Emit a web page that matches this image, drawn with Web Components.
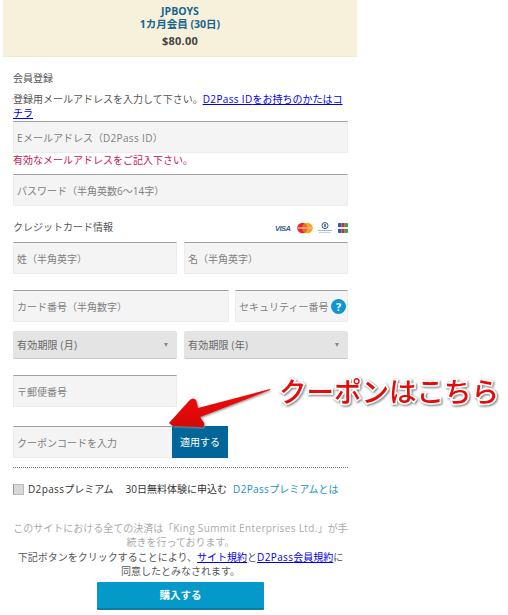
<!DOCTYPE html>
<html lang="ja">
<head>
<meta charset="utf-8">
<title>JPBOYS</title>
<style>
  html, body { margin: 0; padding: 0; background: #fff; overflow: hidden; }
  body { font: 10px/14px "Open Sans", "Noto Sans CJK JP", sans-serif; color: #555; }
</style>
</head>
<body>
<join-page></join-page>
<script>
class PlanBanner extends HTMLElement {
  constructor() {
    super()
    this.attachShadow({ mode: "open" })
    this.shadowRoot.innerHTML = `
      <style>
        :host {
          display: block;
          box-sizing: border-box;
          width: 354px;
          height: 57px;
          margin-left: 3px;
          padding-top: 5px;
          background: #f7f1db;
          border-bottom: 1px solid #eee8d2;
          text-align: center;
          font-weight: 700;
          font-size: 10.5px;
          line-height: 13px;
          color: #16658f;
        }
        .price { margin-top: 3px; color: #444; font-size: 11px; letter-spacing: .2px; }
      </style>
      <div>JPBOYS</div>
      <div>1カ月会員 (30日)</div>
      <div class="price">$80.00</div>
    `
  }
}
customElements.define("plan-banner", PlanBanner)

class TextField extends HTMLElement {
  constructor() {
    super()
    this.attachShadow({ mode: "open" })
    this.shadowRoot.innerHTML = `
      <style>
        :host {
          display: flex;
          align-items: center;
          box-sizing: border-box;
          height: 32px;
          padding: 1px 1px 0 3px;
          background: #f4f4f4;
          border-top: 1px solid #a0a0a0;
          border-left: 1px solid #ececec;
          border-right: 1px solid #ececec;
          border-bottom: 1px solid #ececec;
          color: #808080;
          font-size: 10px;
          white-space: nowrap;
        }
        .text { flex: 1; }
      </style>
      <span class="text"><slot></slot></span>
      <slot name="after"></slot>
    `
  }
}
customElements.define("text-field", TextField)

class SelectField extends HTMLElement {
  constructor() {
    super()
    this.attachShadow({ mode: "open" })
    this.shadowRoot.innerHTML = `
      <style>
        :host {
          display: flex;
          align-items: center;
          justify-content: space-between;
          box-sizing: border-box;
          height: 28px;
          padding: 0 4px;
          background: #e4e4e4;
          border-bottom: 1px solid #c8c8c8;
          border-radius: 2px;
          color: #666;
          font-size: 10px;
          letter-spacing: .2px;
        }
        i {
          width: 0;
          height: 0;
          margin-right: 5px;
          border-left: 2.5px solid transparent;
          border-right: 2.5px solid transparent;
          border-top: 4px solid #888;
        }
      </style>
      <span><slot></slot></span>
      <i></i>
    `
  }
}
customElements.define("select-field", SelectField)

class CardLogos extends HTMLElement {
  constructor() {
    super()
    this.attachShadow({ mode: "open" })
    this.shadowRoot.innerHTML = `
      <style>
        :host { display: block; line-height: 0; }
      </style>
      <svg width="74" height="12" viewBox="0 0 74 12">
        <text x="1" y="9" font-family="Liberation Sans" font-size="7.5" font-weight="700" font-style="italic" fill="#3b5a94" textLength="16">VISA</text>
        <circle cx="28.5" cy="6" r="5.3" fill="#e8262c"/>
        <circle cx="33.5" cy="6" r="5.3" fill="#f6a623"/>
        <path d="M31 1.4a5.3 5.3 0 0 1 0 9.2a5.3 5.3 0 0 1 0-9.2z" fill="#ee6a26"/>
        <rect x="24" y="5" width="15" height="2" fill="#f3b7a0" opacity=".7"/>
        <circle cx="51" cy="3.6" r="3" fill="none" stroke="#27518e" stroke-width="1"/>
        <rect x="50.3" y="2" width="1.4" height="3.2" fill="#27518e"/>
        <rect x="44" y="8" width="14" height="1" fill="#9db4d0"/>
        <rect x="45" y="10" width="12" height="1" fill="#c5d3e3"/>
        <rect x="64" y="1" width="3.4" height="10" rx="1" fill="#2a5ea8"/>
        <rect x="67.4" y="1" width="3.3" height="10" fill="#d8283b"/>
        <rect x="70.7" y="1" width="3.3" height="10" rx="1" fill="#3aa64a"/>
        <rect x="64" y="5" width="10" height="2" fill="#e7eef2"/>
      </svg>
    `
  }
}
customElements.define("card-logos", CardLogos)

class CouponCallout extends HTMLElement {
  constructor() {
    super()
    this.attachShadow({ mode: "open" })
    this.shadowRoot.innerHTML = `
      <style>
        :host {
          position: absolute;
          left: 160px;
          top: 370px;
          width: 348px;
          height: 70px;
          pointer-events: none;
        }
        svg { position: absolute; left: 0; top: 0; overflow: visible; }
        .label {
          position: absolute;
          left: 119px;
          top: 1px;
          font: 500 27.5px/38px "Noto Sans CJK JP", sans-serif;
          white-space: nowrap;
          color: #e30b0b;
          -webkit-text-stroke: 3.5px #fff;
          paint-order: stroke fill;
          filter: drop-shadow(1px 1px 1px #777);
        }
      </style>
      <svg width="130" height="70" viewBox="0 0 130 70">
        <defs>
          <linearGradient id="g" x1="0" y1="0" x2="0" y2="1">
            <stop offset="0" stop-color="#f50a0a"/>
            <stop offset="1" stop-color="#d40808"/>
          </linearGradient>
        </defs>
        <path d="M9 53 L28 32 Q32 26 36 30 L38 38 L110 19 L110 20 L40 47 L44 53 Q45 58 40 57 L13 56 Z"
          fill="url(#g)" style="filter: drop-shadow(1px 1px 1px #888)"/>
      </svg>
      <span class="label">クーポンはこちら</span>
    `
  }
}
customElements.define("coupon-callout", CouponCallout)

class JoinForm extends HTMLElement {
  constructor() {
    super()
    this.attachShadow({ mode: "open" })
    this.shadowRoot.innerHTML = `
      <style>
        :host {
          display: block;
          box-sizing: border-box;
          width: 335px;
          margin: 0 0 0 13px;
          padding-top: 14px;
          font-size: 10px;
          line-height: 14px;
          color: #555;
        }
        a { color: #0000ee; }
        .l { letter-spacing: .35px; }
        .title { margin-bottom: 7px; }
        .lead { margin-bottom: 1px; width: 335px; }
        .error { color: #d0104f; height: 21px; line-height: 15px; padding-top: 0; }
        .card-head {
          display: flex;
          justify-content: space-between;
          align-items: center;
          margin: 15px 0 7px;
          height: 14px;
        }
        .card-head span { margin-top: -2px; }
        .row { display: flex; gap: 7px; }
        .row.card { gap: 6px; margin-top: 16px; }
        .row.card text-field:first-child { width: 216px; flex: none; }
        .row.card text-field:last-child { flex: 1; }
        .row.split text-field, .row.split select-field { flex: 1; }
        .row.exp { margin-top: 9px; }
        .half { width: 164px; margin-top: 16px; }
        .coupon { display: flex; margin-top: 19px; }
        .coupon text-field { width: 159px; }
        .apply {
          width: 56px;
          height: 32px;
          display: flex;
          align-items: center;
          justify-content: center;
          background: #006699;
          color: #fff;
          font-size: 10px;
        }
        .help {
          width: 15px;
          height: 15px;
          border-radius: 50%;
          background: #0f95cf;
          color: #fff;
          font-weight: 700;
          font-size: 11px;
          line-height: 15px;
          text-align: center;
        }
        hr {
          border: 0;
          border-top: 1px dotted #777;
          margin: 9px 0 0;
        }
        .premium {
          display: flex;
          align-items: center;
          margin-top: 14px;
          height: 14px;
          color: #333;
          white-space: nowrap;
        }
        .box {
          flex: none;
          width: 9px;
          height: 9px;
          margin-right: 4px;
          background: #d8d8d8;
          border: 1px solid #bbb;
          border-left-color: #999;
        }
        .gap { width: 12px; }
        .premium b { font-weight: 400; color: #1a8fc4; margin-left: 6px; }
        .notes { text-align: center; margin-top: 25px; }
        .notes .gray { color: #aaa; margin-bottom: 1px; }
        .notes .dark { color: #555; line-height: 14px; }
        .buy {
          display: flex;
          align-items: center;
          justify-content: center;
          box-sizing: border-box;
          width: 167px;
          height: 28px;
          margin: 4px auto 0;
          background: #0499c9;
          border-bottom: 2px solid #0a7ea6;
          border-radius: 1px;
          color: #fff;
          font-weight: 700;
          font-size: 10.5px;
        }
      </style>
      <div class="title">会員登録</div>
      <div class="lead">登録用メールアドレスを入力して下さい。<a href="#"><span class="l">D2Pass ID</span>をお持ちのかたはコ<br>チラ</a></div>
      <text-field><span class="l">E</span>メールアドレス（<span class="l">D2Pass ID</span>）</text-field>
      <div class="error">有効なメールアドレスをご記入下さい。</div>
      <text-field>パスワード（半角英数6～14字）</text-field>
      <div class="card-head"><span>クレジットカード情報</span><card-logos></card-logos></div>
      <div class="row split">
        <text-field>姓（半角英字）</text-field>
        <text-field>名（半角英字）</text-field>
      </div>
      <div class="row card">
        <text-field>カード番号（半角数字）</text-field>
        <text-field>セキュリティー番号<span slot="after" class="help">?</span></text-field>
      </div>
      <div class="row split exp">
        <select-field>有効期限 (月)</select-field>
        <select-field>有効期限 (年)</select-field>
      </div>
      <text-field class="half">〒郵便番号</text-field>
      <div class="coupon">
        <text-field>クーポンコードを入力</text-field>
        <div class="apply">適用する</div>
      </div>
      <hr>
      <div class="premium">
        <span class="box"></span>
        <span><span class="l">D2pass</span>プレミアム</span><span class="gap"></span><span>30日無料体験に申込む</span>
        <b><span class="l">D2Pass</span>プレミアムとは</b>
      </div>
      <div class="notes">
        <div class="gray">このサイトにおける全ての決済は「<span class="l">King Summit Enterprises Ltd.</span>」が手<br>続きを行っております。</div>
        <div class="dark">下記ボタンをクリックすることにより、<a href="#">サイト規約</a>と<a href="#"><span class="l">D2Pass</span>会員規約</a>に<br>同意したとみなされます。</div>
      </div>
      <div class="buy">購入する</div>
    `
  }
}
customElements.define("join-form", JoinForm)

class JoinPage extends HTMLElement {
  constructor() {
    super()
    this.attachShadow({ mode: "open" })
    this.shadowRoot.innerHTML = `
      <style>
        :host { display: block; position: relative; width: 508px; height: 615px; overflow: hidden; }
      </style>
      <plan-banner></plan-banner>
      <join-form></join-form>
      <coupon-callout></coupon-callout>
    `
  }
}
customElements.define("join-page", JoinPage)
</script>
</body>
</html>
